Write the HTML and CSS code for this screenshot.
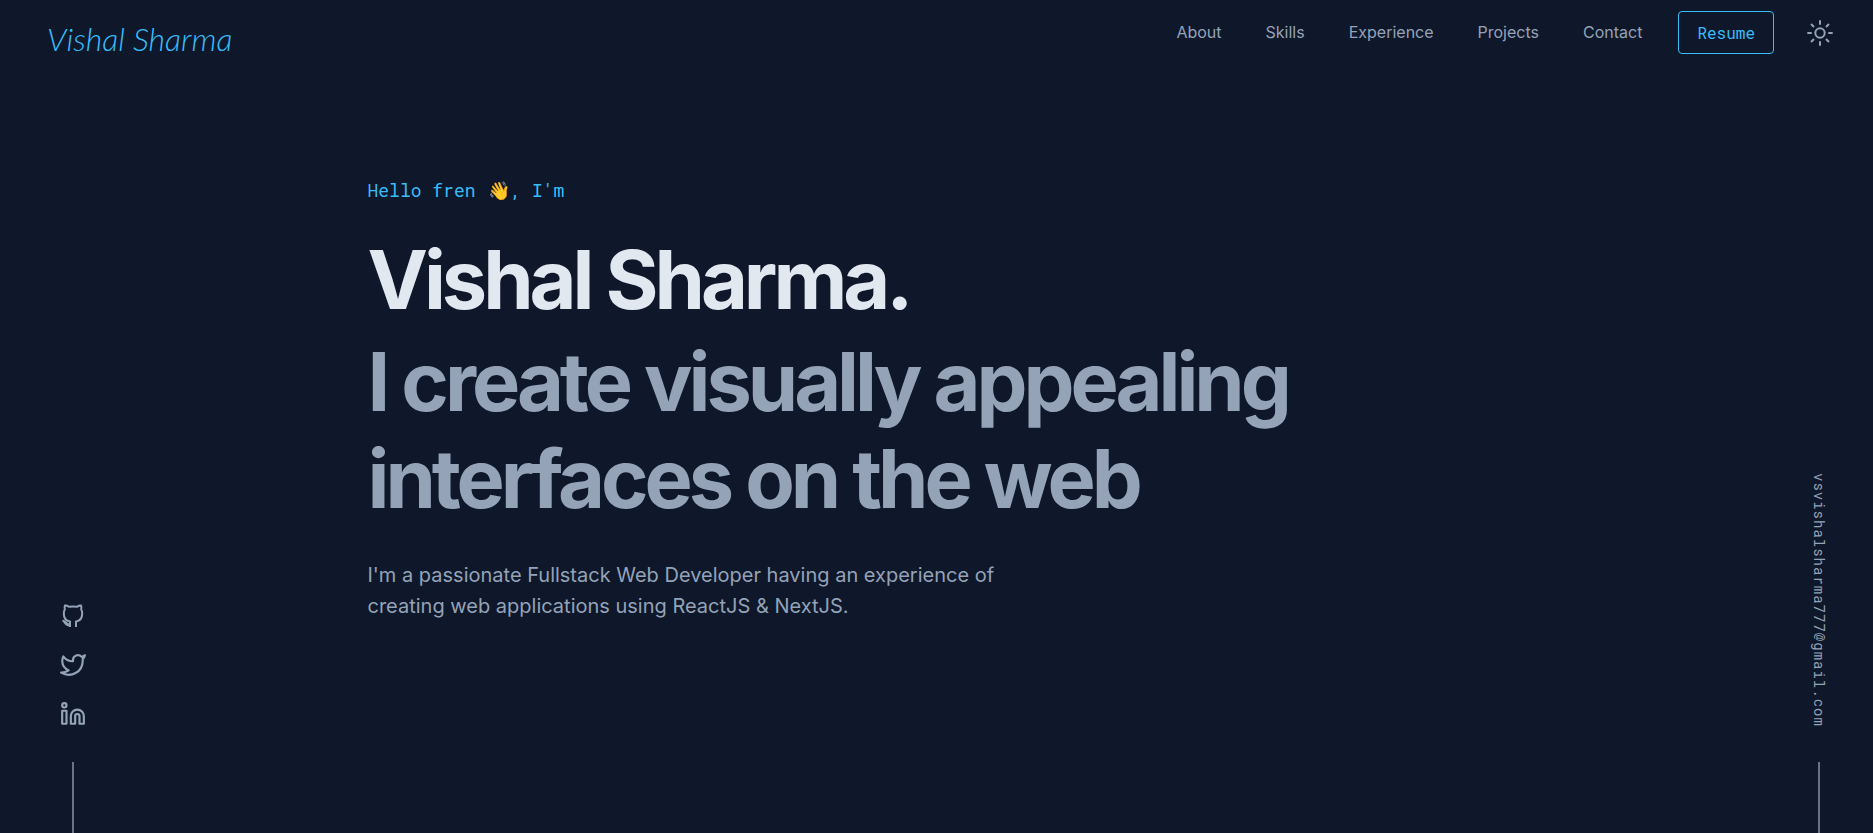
FILE: index.html
```html
<!DOCTYPE html>
<html lang="en">
<head>
<meta charset="utf-8">
<meta name="viewport" content="width=device-width, initial-scale=1">
<title>Vishal Sharma</title>
<link rel="stylesheet" href="styles.css">
</head>
<body>
<header class="header">
  <a class="logo" href="#home">Vishal Sharma</a>
  <nav class="nav">
    <ul class="nav-list">
      <li><a href="#about">About</a></li>
      <li><a href="#skills">Skills</a></li>
      <li><a href="#experience">Experience</a></li>
      <li><a href="#projects">Projects</a></li>
      <li><a href="#contact">Contact</a></li>
    </ul>
    <a class="resume" href="#resume">Resume</a>
    <button class="theme" type="button" aria-label="Toggle theme">
      <svg width="26" height="26" viewBox="0 0 26 26" fill="none" stroke="currentColor" stroke-width="2"><circle cx="13" cy="13" r="4.7"/><path d="M13 .3v4.400M13 21.300v4.400M.3 13h4.400M21.300 13h4.400M4 4l3 3M19 19l3 3M4 22l3-3M19 7l3-3"/></svg>
    </button>
  </nav>
</header>
<div class="page">
  <aside class="rail">
    <a href="#github" aria-label="GitHub"><svg width="26" height="26" viewBox="0 0 26 26" fill="none" stroke="currentColor" stroke-width="2" stroke-linejoin="round"><path d="M10 24v-5.500C6 18 3.800 15 3.800 10.500c0-1.800.3-3 1-4-.4-1.500-.3-2.700.1-3.900 1.300-.2 2.600.2 3.900 1.200 2.600-.5 5.800-.5 8.400 0 1.300-1 2.600-1.400 3.900-1.200.4 1.200.5 2.400.1 3.900.7 1 1 2.200 1 4 0 4.500-2.200 7.500-6.200 8V24M10 21.500c-4 0-3.500-3-7.500-4"/><path d="M4 18.500c1.500 2.500 3 4 6 4.300"/></svg></a>
    <a href="#twitter" aria-label="Twitter"><svg width="26" height="26" viewBox="0 0 24 24" fill="none" stroke="currentColor" stroke-width="2" stroke-linecap="round" stroke-linejoin="round"><path d="M23 3a10.900 10.900 0 0 1-3.140 1.530 4.480 4.480 0 0 0-7.860 3v1A10.660 10.660 0 0 1 3 4s-4 9 5 13a11.640 11.640 0 0 1-7 2c9 5 20 0 20-11.500a4.500 4.500 0 0 0-.080-.830A7.720 7.720 0 0 0 23 3z"/></svg></a>
    <a href="#linkedin" aria-label="LinkedIn"><svg width="26" height="26" viewBox="0 0 24 24" fill="none" stroke="currentColor" stroke-width="2" stroke-linecap="round" stroke-linejoin="round"><path d="M16 8a6 6 0 0 1 6 6v7h-4v-7a2 2 0 0 0-4 0v7h-4v-7a6 6 0 0 1 6-6z"/><path d="M2 9h4v12H2z"/><circle cx="4" cy="4" r="2"/></svg></a>
  </aside>
  <main class="hero">
    <p class="greeting">Hello fren <span class="wave">👋</span>, I'm</p>
    <h1 class="name">Vishal Sharma.</h1>
    <h2 class="tagline">I create visually appealing interfaces on the web</h2>
    <p class="intro">I'm a passionate Fullstack Web Developer having an experience of creating web applications using ReactJS &amp; NextJS.</p>
  </main>
  <aside class="rail">
    <a class="email" href="mailto:vsvishalsharma777@gmail.com">vsvishalsharma777@gmail.com</a>
  </aside>
</div>
</body>
</html>
```
FILE: styles.css
```css
* { box-sizing: border-box; margin: 0; padding: 0; }

body {
  min-height: 100vh;
  display: flex;
  flex-direction: column;
  background: #0f172a;
  color: #94a3b8;
  font-family: Inter, sans-serif;
  font-size: 16px;
}

a { color: inherit; text-decoration: none; }

.header {
  display: flex;
  align-items: center;
  justify-content: space-between;
  height: 65px;
  padding: 0 40px 0 47px;
}

.logo {
  padding-top: 12px;
  color: #38bdf8;
  font: italic 300 32px/40px Lato, sans-serif;
}

.nav, .nav-list { display: flex; align-items: center; }
.nav { gap: 33px; }
.nav-list { gap: 44px; margin-right: 3px; padding-bottom: 2px; list-style: none; }

.resume {
  padding: 10px 18px;
  border: 1px solid #38bdf8;
  border-radius: 4px;
  color: #38bdf8;
  font: 16px/21px "Roboto Mono", "Liberation Mono", monospace;
}

.theme {
  display: flex;
  border: 0;
  background: none;
  color: inherit;
}

.page {
  flex: 1;
  display: grid;
  grid-template-columns: 146px minmax(0, 1176px) 108px;
  justify-content: space-between;
}

.rail {
  display: flex;
  flex-direction: column;
  align-items: center;
  justify-content: flex-end;
  gap: 23px;
}

.rail a { display: flex; }

.rail::after {
  content: "";
  width: 2px;
  height: 71px;
  margin-top: 12px;
  background: #64748b;
}

.rail .email {
  writing-mode: vertical-rl;
  font: 14px/20px "Roboto Mono", "Liberation Mono", monospace;
  letter-spacing: 1px;
}

.hero { padding-top: 111px; }

.greeting {
  color: #38bdf8;
  font: 18px/28px "Roboto Mono", "Liberation Mono", monospace;
}

.wave { padding-left: 2px; }

.name, .tagline {
  font-size: 81px;
  font-weight: 700;
  line-height: 97px;
  letter-spacing: -0.05em;
}

.name { margin-top: 28px; color: #e2e8f0; }
.tagline { max-width: 960px; margin-top: 5px; }

.intro {
  max-width: 660px;
  margin-top: 32px;
  font-size: 20px;
  line-height: 31px;
}
```
